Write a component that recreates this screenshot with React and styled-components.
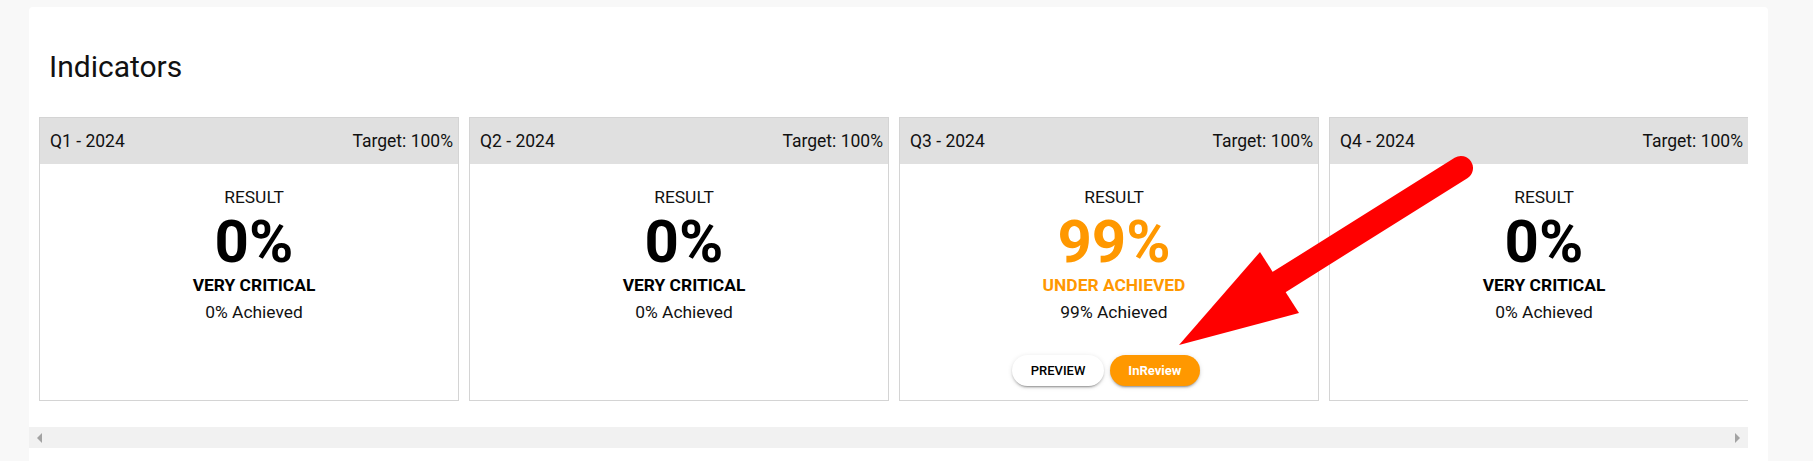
import styled, { createGlobalStyle } from "styled-components";

const quarters = [
  { label: "Q1 - 2024", target: 100, result: 0, status: "VERY CRITICAL", tone: "dark" },
  { label: "Q2 - 2024", target: 100, result: 0, status: "VERY CRITICAL", tone: "dark" },
  { label: "Q3 - 2024", target: 100, result: 99, status: "UNDER ACHIEVED", tone: "orange", review: true },
  { label: "Q4 - 2024", target: 100, result: 0, status: "VERY CRITICAL", tone: "dark" },
];

const toneColor = (tone) => (tone === "orange" ? "#ff9800" : "#000");

const App = () => {
  return (
    <Page>
      <GlobalStyle />
      <Panel>
        <Title>Indicators</Title>
        <Scroller>
          <CardRow>
            {quarters.map((q) => (
              <Card key={q.label}>
                <CardHeader>
                  <span>{q.label}</span>
                  <span>Target: {q.target}%</span>
                </CardHeader>
                <CardBody>
                  <Label>RESULT</Label>
                  <BigValue $tone={q.tone}>{q.result}%</BigValue>
                  <Status $tone={q.tone}>{q.status}</Status>
                  <Label>{q.result}% Achieved</Label>
                  {q.review && (
                    <Actions>
                      <PillButton>PREVIEW</PillButton>
                      <PillButton $primary>InReview</PillButton>
                    </Actions>
                  )}
                </CardBody>
              </Card>
            ))}
          </CardRow>
          <ScrollTrack>
            <Arrow $dir="left" />
            <Arrow $dir="right" />
          </ScrollTrack>
        </Scroller>
      </Panel>

      {/* annotation arrow drawn over the screenshot */}
      <Annotation width="1813" height="461" viewBox="0 0 1813 461">
        <line
          x1="1461"
          y1="168"
          x2="1276"
          y2="284"
          stroke="#ff0000"
          strokeWidth="24"
          strokeLinecap="round"
        />
        <polygon points="1179,345 1260,252 1299,313" fill="#ff0000" />
      </Annotation>
    </Page>
  );
};

export default App;

const GlobalStyle = createGlobalStyle`
  html, body {
    margin: 0;
    padding: 0;
    background: #f8f8f8;
  }
  body {
    font-family: Roboto, "Liberation Sans", Arial, sans-serif;
    color: #111;
  }
  * {
    box-sizing: border-box;
  }
`;

const Page = styled.div`
  position: relative;
  width: 1813px;
  height: 461px;
  overflow: hidden;
  padding: 7px 45px 0 29px;
`;

const Panel = styled.section`
  background: #fff;
  border-radius: 4px 4px 0 0;
  min-height: 454px;
  padding-top: 42px;
`;

const Title = styled.h2`
  margin: 0 0 32px;
  padding-left: 20px;
  font-size: 30px;
  font-weight: 400;
  line-height: 36px;
  color: #111;
`;

const Scroller = styled.div`
  width: 1719px;
`;

const CardRow = styled.div`
  display: flex;
  gap: 10px;
  padding-left: 10px;
  overflow: hidden;
`;

const Card = styled.article`
  flex: 0 0 420px;
  height: 284px;
  border: 1px solid #d4d4d4;
  display: flex;
  flex-direction: column;
`;

const CardHeader = styled.header`
  height: 46px;
  background: #e0e0e0;
  display: flex;
  align-items: center;
  justify-content: space-between;
  padding: 0 5px 0 10px;
  font-size: 17.5px;
  color: #111;
`;

const CardBody = styled.div`
  flex: 1;
  display: flex;
  flex-direction: column;
  align-items: center;
  padding: 20px 0 0 10px;
  text-align: center;
`;

const Label = styled.div`
  font-size: 17.4px;
  line-height: 27px;
  color: #111;
`;

const BigValue = styled.div`
  font-size: 60px;
  font-weight: 700;
  line-height: 61px;
  color: ${({ $tone }) => toneColor($tone)};
`;

const Status = styled.div`
  font-size: 17.4px;
  font-weight: 700;
  line-height: 27px;
  color: ${({ $tone }) => toneColor($tone)};
`;

const Actions = styled.div`
  display: flex;
  gap: 6px;
  margin-top: 29px;
  margin-left: -16px;
`;

const PillButton = styled.button`
  height: 31px;
  padding: 0 18.5px;
  border: none;
  border-radius: 16px;
  font-family: Roboto, "Liberation Sans", Arial, sans-serif;
  font-size: 13px;
  font-weight: ${({ $primary }) => ($primary ? 700 : 500)};
  background: ${({ $primary }) => ($primary ? "#ff9800" : "#fff")};
  color: ${({ $primary }) => ($primary ? "#fff" : "#000")};
  box-shadow: 0 3px 1px -2px rgba(0, 0, 0, 0.2), 0 2px 2px 0 rgba(0, 0, 0, 0.14),
    0 1px 5px 0 rgba(0, 0, 0, 0.12);
  cursor: pointer;
`;

const ScrollTrack = styled.div`
  margin-top: 26px;
  height: 21px;
  background: #f1f1f1;
  display: flex;
  align-items: center;
  justify-content: space-between;
  padding: 0 8px;
`;

const Arrow = styled.span`
  width: 0;
  height: 0;
  border-top: 5px solid transparent;
  border-bottom: 5px solid transparent;
  ${({ $dir }) =>
    $dir === "left"
      ? "border-right: 5px solid #a3a3a3;"
      : "border-left: 5px solid #a3a3a3;"}
`;

const Annotation = styled.svg`
  position: absolute;
  top: 0;
  left: 0;
  pointer-events: none;
`;
